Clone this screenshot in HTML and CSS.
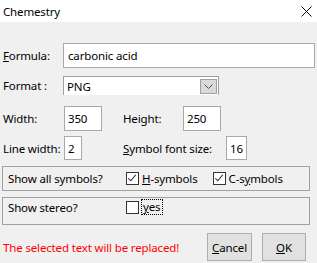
FILE: index.html
```html
<!DOCTYPE html>
<html>

<head>
    <title>Chemestry</title>
    <link rel="stylesheet" href="styles.css">
</head>

<body>
    <div class="dialog">
        <div class="titlebar">
            <div class="title">Chemestry</div>
            <svg class="close_btn" width="11" height="11" viewBox="0 0 11 11">
                <path d="M0.5 0.5 L10.5 10.5 M10.5 0.5 L0.5 10.5" stroke="#000" stroke-width="1" fill="none" />
            </svg>
        </div>

        <div class="row formula_row">
            <div class="label formula_label"><u>F</u>ormula:</div>
            <div class="textbox formula_input">carbonic acid</div>
        </div>

        <div class="row format_row">
            <div class="label formula_label">Format :</div>
            <div class="combo">
                <div class="combo_text">PNG</div>
                <div class="combo_btn">
                    <svg width="9" height="5" viewBox="0 0 9 5">
                        <path d="M0.5 0.5 L4.5 4.5 L8.5 0.5" stroke="#555" stroke-width="1" fill="none" />
                    </svg>
                </div>
            </div>
        </div>

        <div class="row size_row">
            <div class="label size_label">Width:</div>
            <div class="textbox num_input">350</div>
            <div class="label height_label">Height:</div>
            <div class="textbox num_input">250</div>
        </div>

        <div class="row line_row">
            <div class="label size_label">Line width:</div>
            <div class="textbox line_input">2</div>
            <div class="label symbol_label"><u>S</u>ymbol font size:</div>
            <div class="textbox font_input">16</div>
        </div>

        <div class="group symbols_group">
            <div class="group_text">Show all symbols?</div>
            <div class="check checked"></div>
            <div class="check_label"><u>H</u>-symbols</div>
            <div class="check checked c_check"></div>
            <div class="check_label">C-s<u>y</u>mbols</div>
        </div>

        <div class="group stereo_group">
            <div class="group_text">Show stereo?</div>
            <div class="check"></div>
            <div class="check_label focused"><u>y</u>es</div>
        </div>

        <div class="footer">
            <div class="warning">The selected text will be replaced!</div>
            <div class="button cancel_btn"><u>C</u>ancel</div>
            <div class="button ok_btn"><u>O</u>K</div>
        </div>
    </div>
</body>

</html>
```

FILE: styles.css
```css
body {
    margin: 0;
    background-color: #f0f0f0;
    color: #000;
    font-family: 'Segoe UI', 'Noto Sans', sans-serif;
    font-size: 11.5px;
    letter-spacing: -0.15px;
    overflow: hidden;
}

.dialog {
    width: 317px;
    height: 263px;
}

.titlebar {
    height: 22px;
    background-color: #fff;
    display: flex;
    align-items: center;
    justify-content: space-between;
    padding-left: 3px;
    padding-right: 5px;
}

.close_btn {
    display: block;
}

.row {
    display: flex;
    align-items: center;
    padding-left: 3px;
}

.label {
    white-space: nowrap;
}

u {
    text-decoration: underline;
    text-underline-offset: 1px;
}

.textbox {
    box-sizing: border-box;
    background-color: #fff;
    border: 1px solid #a9a9a9;
    display: flex;
    align-items: center;
    padding-left: 3px;
    height: 100%;
}

.formula_row {
    margin-top: 21px;
    height: 25px;
}

.formula_label {
    width: 60px;
}

.formula_input {
    width: 252px;
    padding-left: 4px;
}

.format_row {
    margin-top: 8px;
    height: 19px;
}

.combo {
    box-sizing: border-box;
    width: 156px;
    height: 19px;
    background-color: #fff;
    border: 1px solid #a0a0a0;
    border-bottom: none;
    display: flex;
    align-items: center;
    justify-content: space-between;
    padding-left: 3px;
    padding-right: 1px;
}

.combo_btn {
    box-sizing: border-box;
    width: 17px;
    height: 15px;
    background-color: #dadada;
    border: 1px solid #a0a0a0;
    display: flex;
    align-items: center;
    justify-content: center;
}

.combo_btn svg {
    display: block;
}

.size_row {
    margin-top: 11px;
    height: 25px;
}

.size_label {
    width: 61px;
}

.num_input {
    width: 38px;
}

.height_label {
    margin-left: 21px;
    width: 60px;
}

.line_row {
    margin-top: 5px;
    height: 24px;
}

.line_input {
    width: 18px;
}

.symbol_label {
    margin-left: 41px;
    width: 103px;
}

.font_input {
    width: 21px;
}

.group {
    box-sizing: border-box;
    margin-left: 2px;
    width: 308px;
    border: 1px solid #a0a0a0;
    display: flex;
    padding-left: 5px;
}

.symbols_group {
    margin-top: 6px;
    height: 25px;
    align-items: center;
}

.stereo_group {
    margin-top: 6px;
    height: 28px;
    align-items: flex-start;
    padding-top: 2px;
}

.group_text {
    width: 118px;
    white-space: nowrap;
}

.check {
    box-sizing: border-box;
    width: 13px;
    height: 13px;
    background-color: #fff;
    border: 1px solid #333;
    position: relative;
    flex-shrink: 0;
}

.checked::after {
    content: "";
    position: absolute;
    left: 3px;
    top: 0px;
    width: 3px;
    height: 7px;
    border-right: 1.5px solid #333;
    border-bottom: 1.5px solid #333;
    transform: rotate(40deg);
}

.stereo_group .check {
    margin-top: 1px;
}

.check_label {
    margin-left: 3px;
    white-space: nowrap;
}

.c_check {
    margin-left: 15px;
}

.focused {
    outline: 1px dotted #000;
    padding: 0 2px 0 1px;
    line-height: 14px;
    margin-left: 3px;
}

.footer {
    margin-top: 8px;
    height: 28px;
    display: flex;
    align-items: center;
    padding-left: 3px;
}

.warning {
    color: #ff0000;
    width: 204px;
    white-space: nowrap;
}

.button {
    box-sizing: border-box;
    height: 28px;
    background-color: #e1e1e1;
    border: 1px solid #adadad;
    display: flex;
    align-items: center;
    justify-content: center;
}

.cancel_btn {
    width: 45px;
}

.ok_btn {
    width: 44px;
    margin-left: 10px;
}
```
